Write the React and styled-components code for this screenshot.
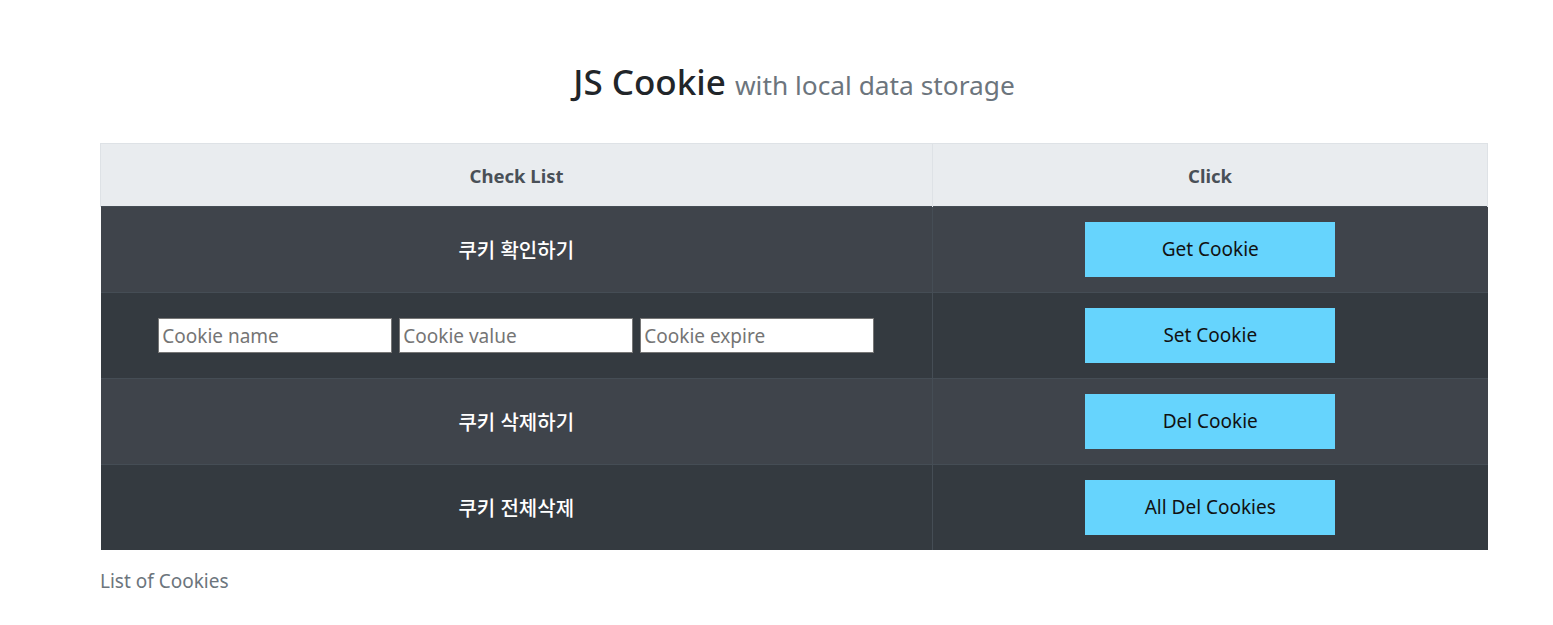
import React from 'react'
import styled, { createGlobalStyle } from 'styled-components'

const GlobalStyle = createGlobalStyle`
  body {
    margin: 0;
    background: #fff;
    font-family: "Noto Sans", "Noto Sans CJK KR", sans-serif;
    color: #212529;
  }
`

const Page = styled.div`
  width: 1388px;
  margin-left: 100px;
  padding-top: 61px;
`

const Title = styled.h1`
  margin: 0 0 40px;
  text-align: center;
  font-size: 35px;
  font-weight: 500;
  line-height: 1.2;
  color: #212529;
`

const Sub = styled.small`
  font-size: 26.3px;
  font-weight: 400;
  color: #6c757d;
`

const Table = styled.table`
  width: 100%;
  border-collapse: collapse;
  caption-side: bottom;
`

const Caption = styled.caption`
  text-align: left;
  padding-top: 18px;
  font-size: 19px;
  color: #6c757d;
`

const Th = styled.th`
  height: 62px;
  padding: 0;
  background: #e9ecef;
  color: #495057;
  font-size: 18.5px;
  font-weight: 700;
  border: 1px solid #dee2e6;
  border-bottom-width: 0;
  width: ${p => p.$w};
`

const Row = styled.tr`
  background: ${p => (p.$odd ? '#3f444b' : '#343a40')};
`

const Td = styled.td`
  height: 85px;
  padding: 0;
  text-align: center;
  color: #fff;
  font-size: 20px;
  font-weight: 500;
  border-top: 1px solid #454d55;
  border-left: ${p => (p.$divider ? '1px solid #454d55' : '0')};
`

const Fields = styled.div`
  display: flex;
  justify-content: center;
  gap: 7px;
`

const Field = styled.input`
  box-sizing: border-box;
  width: 234px;
  height: 35px;
  padding: 0 3px;
  border: 1px solid #767676;
  background: #fff;
  font-family: inherit;
  font-size: 19px;
  &::placeholder {
    color: #757575;
  }
`

const Button = styled.button`
  width: 250px;
  height: 55px;
  margin-bottom: 1px;
  border: none;
  background: #66d4fd;
  color: #111;
  font-family: inherit;
  font-size: 19px;
  vertical-align: middle;
  cursor: pointer;
`

const rows = [
  { label: '쿠키 확인하기', btn: 'Get Cookie' },
  { fields: true, btn: 'Set Cookie' },
  { label: '쿠키 삭제하기', btn: 'Del Cookie' },
  { label: '쿠키 전체삭제', btn: 'All Del Cookies' },
]

export default function App() {
  return (
    <>
      <GlobalStyle />
      <Page>
        <Title>
          JS Cookie <Sub>with local data storage</Sub>
        </Title>
        <Table>
          <Caption>List of Cookies</Caption>
          <thead>
            <tr>
              <Th $w="831px">Check List</Th>
              <Th>Click</Th>
            </tr>
          </thead>
          <tbody>
            {rows.map((r, i) => (
              <Row key={r.btn} $odd={i % 2 === 0}>
                <Td>
                  {r.fields ? (
                    <Fields>
                      <Field placeholder="Cookie name" />
                      <Field placeholder="Cookie value" />
                      <Field placeholder="Cookie expire" />
                    </Fields>
                  ) : (
                    r.label
                  )}
                </Td>
                <Td $divider>
                  <Button>{r.btn}</Button>
                </Td>
              </Row>
            ))}
          </tbody>
        </Table>
      </Page>
    </>
  )
}
